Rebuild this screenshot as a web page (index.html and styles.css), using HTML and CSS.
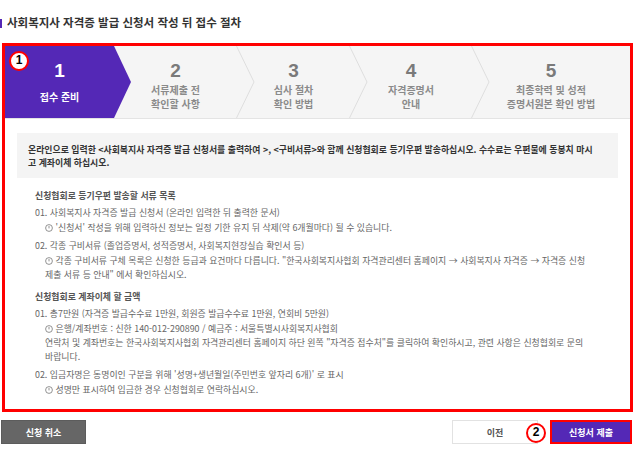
FILE: index.html
```html
<!DOCTYPE html>
<html lang="ko">
<head>
    <meta charset="UTF-8">
    <meta name="viewport" content="width=device-width, initial-scale=1.0">
    <title>사회복지사 자격증 발급 신청서 접수 절차</title>
    <link rel="stylesheet" href="styles.css">
</head>
<body>
    <h2 class="page-title"><span class="title-bar"></span>사회복지사 자격증 발급 신청서 작성 뒤 접수 절차</h2>

    <div class="guide-box">
        <span class="mark mark-1">1</span>
        <div class="steps">
            <div class="step step-1 active">
                <div class="step-num">1</div>
                <div class="step-label">접수 준비</div>
            </div>
            <div class="step step-2">
                <div class="step-num">2</div>
                <div class="step-label">서류제출 전<br>확인할 사항</div>
                <svg class="chevron" width="19" height="72" viewBox="0 0 19 72"><polyline points="0.5,0 18,36 0.5,72" fill="none" stroke="#dedede" stroke-width="1"/></svg>
            </div>
            <div class="step step-3">
                <div class="step-num">3</div>
                <div class="step-label">심사 절차<br>확인 방법</div>
                <svg class="chevron" width="19" height="72" viewBox="0 0 19 72"><polyline points="0.5,0 18,36 0.5,72" fill="none" stroke="#dedede" stroke-width="1"/></svg>
            </div>
            <div class="step step-4">
                <div class="step-num">4</div>
                <div class="step-label">자격증명서<br>안내</div>
                <svg class="chevron" width="19" height="72" viewBox="0 0 19 72"><polyline points="0.5,0 18,36 0.5,72" fill="none" stroke="#dedede" stroke-width="1"/></svg>
            </div>
            <div class="step step-5">
                <div class="step-num">5</div>
                <div class="step-label">최종학력 및 성적<br>증명서원본 확인 방법</div>
            </div>
        </div>

        <div class="guide-body">
            <div class="notice">
                온라인으로 입력한 &lt;사회복지사 자격증 발급 신청서를 출력하여 &gt;, &lt;구비서류&gt;와 함께 신청협회로 등기우편 발송하십시오. 수수료는 우편물에 동봉치 마시<br>
                고 계좌이체 하십시오.
            </div>

            <div class="section">
                <div class="section-title">신청협회로 등기우편 발송할 서류 목록</div>
                <div class="item">
                    <div>01. 사회복지사 자격증 발급 신청서 (온라인 입력한 뒤 출력한 문서)</div>
                    <div class="item-note"><svg class="info" width="8" height="8" viewBox="0 0 8 8"><circle cx="4" cy="4" r="3.4" fill="none" stroke="#777" stroke-width="0.8"/><line x1="4" y1="2" x2="4" y2="4.4" stroke="#777" stroke-width="0.8"/></svg> '신청서' 작성을 위해 입력하신 정보는 일정 기한 유지 뒤 삭제(약 6개월마다) 될 수 있습니다.</div>
                </div>
                <div class="item">
                    <div>02. 각종 구비서류 (졸업증명서, 성적증명서, 사회복지현장실습 확인서 등)</div>
                    <div class="item-note"><svg class="info" width="8" height="8" viewBox="0 0 8 8"><circle cx="4" cy="4" r="3.4" fill="none" stroke="#777" stroke-width="0.8"/><line x1="4" y1="2" x2="4" y2="4.4" stroke="#777" stroke-width="0.8"/></svg> 각종 구비서류 구체 목록은 신청한 등급과 요건마다 다릅니다. "한국사회복지사협회 자격관리센터 홈페이지 → 사회복지사 자격증 → 자격증 신청<br>제출 서류 등 안내" 에서 확인하십시오.</div>
                </div>
            </div>

            <div class="section">
                <div class="section-title">신청협회로 계좌이체 할 금액</div>
                <div class="item">
                    <div>01. 총7만원 (자격증 발급수수료 1만원, 회원증 발급수수료 1만원, 연회비 5만원)</div>
                    <div class="item-note"><svg class="info" width="8" height="8" viewBox="0 0 8 8"><circle cx="4" cy="4" r="3.4" fill="none" stroke="#777" stroke-width="0.8"/><line x1="4" y1="2" x2="4" y2="4.4" stroke="#777" stroke-width="0.8"/></svg> 은행/계좌번호 : 신한 140-012-290890 / 예금주 : 서울특별시사회복지사협회<br>연락처 및 계좌번호는 한국사회복지사협회 자격관리센터 홈페이지 하단 왼쪽 "자격증 접수처"를 클릭하여 확인하시고, 관련 사항은 신청협회로 문의<br>바랍니다.</div>
                </div>
                <div class="item">
                    <div>02. 입금자명은 동명이인 구분을 위해 '성명+생년월일(주민번호 앞자리 6개)' 로 표시</div>
                    <div class="item-note"><svg class="info" width="8" height="8" viewBox="0 0 8 8"><circle cx="4" cy="4" r="3.4" fill="none" stroke="#777" stroke-width="0.8"/><line x1="4" y1="2" x2="4" y2="4.4" stroke="#777" stroke-width="0.8"/></svg> 성명만 표시하여 입금한 경우 신청협회로 연락하십시오.</div>
                </div>
            </div>
        </div>
    </div>

    <div class="actions">
        <button class="btn btn-cancel">신청 취소</button>
        <div class="actions-right">
            <button class="btn btn-prev">이전</button>
            <span class="mark mark-2">2</span>
            <button class="btn btn-submit">신청서 제출</button>
        </div>
    </div>
</body>
</html>
```

FILE: styles.css
```css
* {
    box-sizing: border-box;
}
body {
    margin: 0;
    width: 635px;
    font-family: "Noto Sans CJK KR", "Noto Sans", sans-serif;
    color: #555;
    background: #fff;
}
.page-title {
    margin: 0 0 14px;
    padding-top: 16px;
    font-size: 11.5px;
    line-height: 13px;
    font-weight: bold;
    color: #333;
}
.title-bar {
    display: inline-block;
    width: 2px;
    height: 9px;
    margin-right: 5px;
    background: #5428b6;
    vertical-align: -1px;
}
.guide-box {
    position: relative;
    margin: 0 2px;
    border: 3px solid #f00;
}
.mark {
    position: absolute;
    z-index: 5;
    width: 20px;
    height: 20px;
    border: 2.5px solid #f00;
    border-radius: 50%;
    background: #fff;
    color: #000;
    font-family: "Liberation Sans", Arial, sans-serif;
    font-size: 12px;
    font-weight: bold;
    line-height: 15px;
    text-align: center;
}
.mark-1 {
    left: 4px;
    top: 5px;
}
.mark-2 {
    left: 74px;
    top: 3px;
}
.steps {
    display: flex;
    height: 73px;
    background: #f5f5f5;
    border-bottom: 1px solid #e4e4e4;
}
.step {
    position: relative;
    display: flex;
    flex-direction: column;
    align-items: center;
    padding-top: 15px;
}
.step-1 { width: 109px; }
.step-2 { width: 123px; }
.step-3 { width: 113px; }
.step-4 { width: 122px; }
.step-5 { flex: 1; }
.step.active {
    background: #5428b6;
}
.step.active::after {
    content: "";
    position: absolute;
    top: 0;
    right: -17px;
    width: 17px;
    height: 72px;
    background: #5428b6;
    clip-path: polygon(0 0, 100% 50%, 0 100%);
    z-index: 2;
}
.chevron {
    position: absolute;
    top: 0;
    right: -18px;
    z-index: 1;
}
.step-num {
    font-family: "Liberation Sans", Arial, sans-serif;
    font-size: 19px;
    font-weight: bold;
    line-height: 20px;
    color: #7a7a7a;
}
.step-label {
    display: flex;
    align-items: center;
    height: 28px;
    margin-top: 2px;
    font-size: 10px;
    line-height: 14px;
    font-weight: bold;
    color: #8a8a8a;
    text-align: center;
}
.step.active .step-num,
.step.active .step-label {
    color: #fff;
}
.guide-body {
    padding: 14px 12px 12px;
}
.notice {
    padding: 10px 11px 9px;
    background: #f4f4f4;
    font-size: 8.9px;
    line-height: 13px;
    font-weight: bold;
    color: #333;
    white-space: nowrap;
}
.section {
    margin-top: 8px;
    padding-left: 18px;
    font-size: 8.9px;
    line-height: 14px;
    white-space: nowrap;
}
.notice + .section {
    margin-top: 11px;
}
.section-title {
    margin-bottom: 3px;
    font-weight: bold;
    color: #555;
}
.item {
    color: #666;
}
.item + .item {
    margin-top: 4px;
}
.item-note {
    margin-top: 1px;
    padding-left: 10px;
}
.info {
    vertical-align: -1px;
}
.actions {
    display: flex;
    justify-content: space-between;
    margin-top: 8px;
    padding: 0 5px 0 1px;
}
.actions-right {
    position: relative;
    display: flex;
    align-items: center;
    gap: 14px;
}
.btn {
    height: 24px;
    padding: 0;
    border: 1px solid;
    font-family: inherit;
    font-size: 9px;
    font-weight: bold;
    cursor: pointer;
}
.btn-cancel {
    width: 85px;
    background: #666;
    border-color: #5c5c5c;
    color: #fff;
}
.btn-prev {
    width: 86px;
    background: #fff;
    border-color: #e2e2e2;
    color: #555;
}
.btn-submit {
    width: 78px;
    height: 20px;
    background: #5428b6;
    border-color: #5428b6;
    color: #fff;
    outline: 2px solid #f00;
}
```
